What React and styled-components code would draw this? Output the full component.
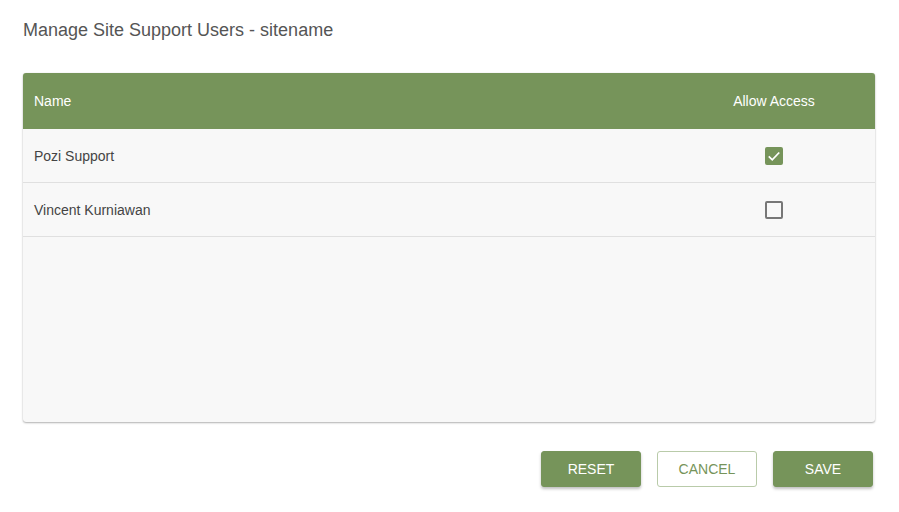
import React, { useState } from "react";
import styled, { createGlobalStyle } from "styled-components";

// ---------- Styled Components ----------
const GlobalStyle = createGlobalStyle`
  html, body { margin: 0; padding: 0; background: #fff; }
  body { font-family: "Liberation Sans", Arial, sans-serif; }
  * { box-sizing: border-box; }
`;

const Dialog = styled.div`
  width: 899px; height: 512px; background: #fff;
  padding: 19px 24px 25px 23px;
  display: flex; flex-direction: column;
`;
const Title = styled.h2`
  margin: 0 0 32px; font-size: 18px; font-weight: 400;
  color: #555; line-height: 22px;
`;
const TableCard = styled.div`
  height: 351px; width: 852px;
  background: #f8f8f8; border-radius: 3px; overflow: hidden;
  box-shadow: 0 1px 2px rgba(0,0,0,0.3), 0 0 1px rgba(0,0,0,0.12);
  display: flex; flex-direction: column;
`;
const Row = styled.div`
  display: grid; grid-template-columns: 1fr 200px; align-items: center;
  height: ${p => (p.$head ? "56px" : "54px")};
  background: ${p => (p.$head ? "#76945a" : "transparent")};
  color: ${p => (p.$head ? "#fff" : "#444")};
  font-size: 14px;
  border-bottom: ${p => (p.$head ? "none" : "1px solid #e0e0e0")};
`;
const NameCell = styled.div`padding-left: 11px;`;
const CheckCell = styled.div`
  display: flex; justify-content: center; padding-right: 2px;
`;
const Box = styled.button`
  width: 18px; height: 18px; padding: 0; border-radius: 2px; cursor: pointer;
  border: 2px solid ${p => (p.$on ? "#76945a" : "#777")};
  background: ${p => (p.$on ? "#76945a" : "transparent")};
  display: flex; align-items: center; justify-content: center;
`;
const Footer = styled.div`
  display: flex; justify-content: flex-end; gap: 16px;
  margin-top: 29px; padding-right: 2px;
`;
const Button = styled.button`
  width: 100px; height: 36px; border-radius: 3px;
  font-family: inherit; font-size: 14px; text-transform: uppercase; cursor: pointer;
  border: 1px solid ${p => (p.$outline ? "#b9cba9" : "#76945a")};
  background: ${p => (p.$outline ? "#fff" : "#76945a")};
  color: ${p => (p.$outline ? "#76945a" : "#fff")};
  box-shadow: ${p => (p.$outline ? "none" : "0 2px 3px rgba(0,0,0,0.25)")};
`;

const users = [
  { name: "Pozi Support", allowed: true },
  { name: "Vincent Kurniawan", allowed: false },
];

// ---------- Component ----------
export default function App() {
  const [list, setList] = useState(users);

  const toggle = (i) =>
    setList(prev => prev.map((u, j) => (j === i ? { ...u, allowed: !u.allowed } : u)));

  return (
    <>
      <GlobalStyle />
      <Dialog>
        <Title>Manage Site Support Users - sitename</Title>
        <TableCard>
          <Row $head>
            <NameCell>Name</NameCell>
            <CheckCell>Allow Access</CheckCell>
          </Row>
          {list.map((u, i) => (
            <Row key={u.name}>
              <NameCell>{u.name}</NameCell>
              <CheckCell>
                <Box $on={u.allowed} onClick={() => toggle(i)}>
                  {u.allowed && (
                    <svg width="16" height="16" viewBox="0 0 24 24">
                      <path d="M3 12.5l6 6L21 6" fill="none" stroke="#fff" strokeWidth="3" />
                    </svg>
                  )}
                </Box>
              </CheckCell>
            </Row>
          ))}
        </TableCard>
        <Footer>
          <Button onClick={() => setList(users)}>Reset</Button>
          <Button $outline>Cancel</Button>
          <Button>Save</Button>
        </Footer>
      </Dialog>
    </>
  );
}
